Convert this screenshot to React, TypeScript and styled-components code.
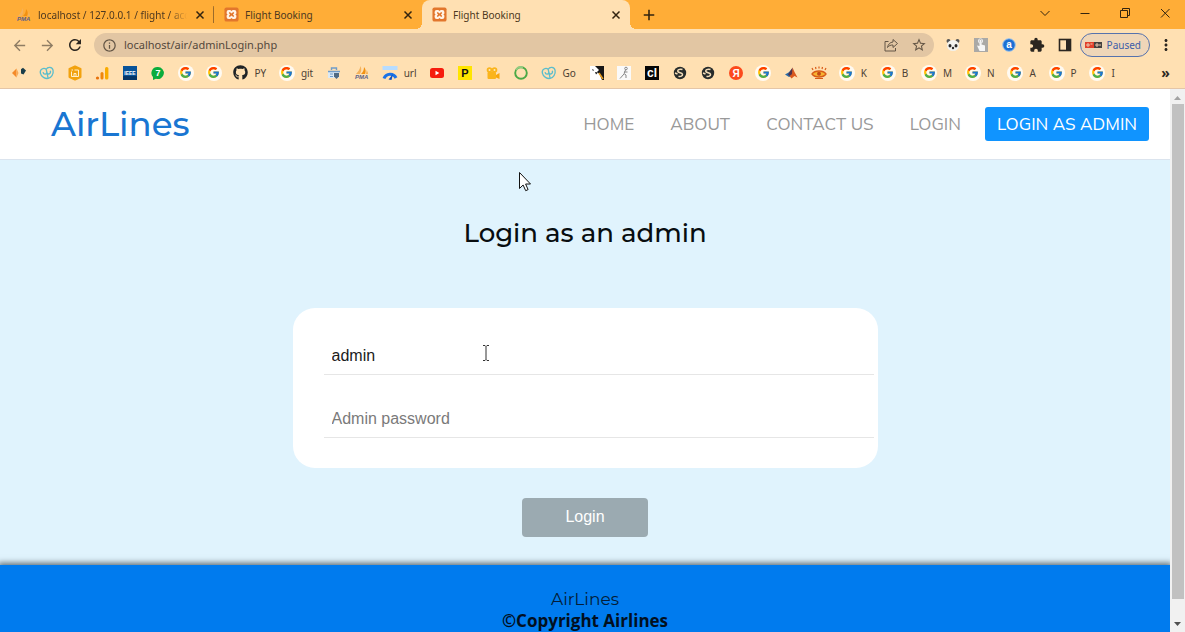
import React, { useState } from "react";
import styled, { createGlobalStyle, css } from "styled-components";
import { FcGoogle } from "react-icons/fc";
import { FaGithub } from "react-icons/fa";
import {
  MdArrowBack,
  MdArrowForward,
  MdExtension,
  MdInfoOutline,
  MdMoreVert,
  MdRefresh,
  MdStarBorder,
} from "react-icons/md";

const uiFont = `"Noto Sans", "Open Sans", sans-serif`;
const brandFont = `"Montserrat", "Inter", sans-serif`;
const navFont = `"Muli", "Mulish", "Nunito Sans", "Nunito", "Lato", sans-serif`;
const formFont = `"Liberation Sans", Arial, sans-serif`;

const GlobalStyle = createGlobalStyle`
  *, *::before, *::after { box-sizing: border-box; }
  body { margin: 0; font-family: ${uiFont}; }
  button { border: 0; padding: 0; margin: 0; background: none; font: inherit; color: inherit; }
  a { color: inherit; text-decoration: none; }
  svg { display: block; flex: none; }
`;

const Window = styled.div`
  position: relative;
  display: flex;
  flex-direction: column;
  height: 100vh;
  overflow: hidden;
`;

/* ---------- Browser chrome ---------- */

const TabStrip = styled.div`
  display: flex;
  align-items: stretch;
  height: 29px;
  padding-left: 6px;
  background: #ffad37;
  color: #4d3820;
`;

const TabItem = styled.div<{ $active?: boolean; $divider?: boolean }>`
  position: relative;
  display: flex;
  align-items: center;
  gap: 6px;
  width: 208px;
  padding: 0 7px 0 10px;
  font-size: 10px;
  line-height: 14px;
  border-radius: 8px 8px 0 0;
  background: ${(p) => (p.$active ? "#ffe0b2" : "transparent")};
  ${(p) =>
    p.$divider &&
    css`
      background: linear-gradient(#9c6b2a, #9c6b2a) right center / 1px 17px no-repeat;
    `}
  ${(p) =>
    p.$active &&
    css`
      &::before,
      &::after {
        content: "";
        position: absolute;
        bottom: 0;
        width: 6px;
        height: 6px;
      }
      &::before {
        right: 100%;
        background: radial-gradient(circle at 0 0, transparent 6px, #ffe0b2 6px);
      }
      &::after {
        left: 100%;
        background: radial-gradient(circle at 100% 0, transparent 6px, #ffe0b2 6px);
      }
    `}
`;

const TabTitle = styled.span<{ $fade?: boolean }>`
  flex: 1;
  overflow: hidden;
  white-space: nowrap;
  ${(p) =>
    p.$fade &&
    css`
      mask-image: linear-gradient(to right, #000 88%, transparent);
    `}
`;

const IconButton = styled.button<{ $size?: number }>`
  display: flex;
  align-items: center;
  justify-content: center;
  flex: none;
  width: ${(p) => p.$size ?? 18}px;
  height: ${(p) => p.$size ?? 18}px;
`;

const NewTab = styled(IconButton)`
  align-self: center;
  margin-left: 10px;
  color: #33240f;
`;

const WindowControls = styled.div`
  display: flex;
  align-items: center;
  gap: 22px;
  margin-left: auto;
  padding: 0 11px 4px 0;
  color: #33240f;
`;

const Toolbar = styled.div`
  display: flex;
  align-items: center;
  gap: 10px;
  height: 32px;
  padding: 0 10px;
  background: #ffe0b2;
  color: #2b2620;
`;

const AddressBar = styled.div`
  display: flex;
  align-items: center;
  gap: 7px;
  flex: 1;
  height: 24px;
  padding: 0 6px 0 8px;
  border-radius: 12px;
  background: #e2c6a3;
  color: #645646;
`;

const AddressInput = styled.input`
  flex: 1;
  min-width: 0;
  padding: 0;
  border: 0;
  outline: 0;
  background: transparent;
  color: #54483c;
  font-family: ${uiFont};
  font-size: 11px;
  line-height: 18px;
`;

const NavGroup = styled.div<{ $muted?: boolean }>`
  display: flex;
  gap: 10px;
  color: ${(p) => (p.$muted ? "#8f7d64" : "inherit")};
`;

const Extensions = styled.div`
  display: flex;
  align-items: center;
  gap: 10px;
`;

const ProfileChip = styled.button`
  display: flex;
  align-items: center;
  justify-content: space-between;
  width: 70px;
  height: 24px;
  margin-left: -4px;
  padding: 0 8px 0 4px;
  border: 1px solid #5672ad;
  border-radius: 12px;
  background: #efd6b8;
  color: #3c5da8;
  font-size: 10px;
`;

const MenuButton = styled(IconButton)`
  margin-left: -3px;
`;

const Bookmarks = styled.nav`
  display: flex;
  align-items: center;
  justify-content: space-between;
  height: 28px;
  padding: 0 11px 4px 11px;
  border-bottom: 1px solid #e4c6a8;
  background: #ffe0b2;
  color: #4d4034;
`;

const Bookmark = styled.a<{ $labelled?: boolean }>`
  display: flex;
  align-items: center;
  gap: 6px;
  padding-right: ${(p) => (p.$labelled ? 1 : 0)}px;
  font-size: 10px;
  line-height: 16px;
`;

const More = styled.button`
  width: 16px;
  margin-left: 30px;
  font-size: 14px;
  font-weight: 700;
  line-height: 16px;
  color: #2b2620;
`;

const IconCircle = styled.span`
  display: flex;
  align-items: center;
  justify-content: center;
  width: 16px;
  height: 16px;
  border-radius: 8px;
  background: #fffaf2;
`;

/* ---------- Site ---------- */

const Viewport = styled.div`
  display: flex;
  flex: 1;
  min-height: 0;
`;

const Site = styled.div`
  display: flex;
  flex-direction: column;
  flex: 1;
  min-width: 0;
  overflow: hidden;
  background: #e0f3fd;
`;

const Header = styled.header`
  display: flex;
  align-items: center;
  justify-content: space-between;
  flex: none;
  height: 71px;
  padding: 0 21px 0 51px;
  border-bottom: 1px solid #dbe4ee;
  background: #fff;
`;

const Logo = styled.a`
  font-family: ${brandFont};
  font-size: 34px;
  font-weight: 500;
  line-height: 44px;
  color: #1976d2;
`;

const Menu = styled.nav`
  display: flex;
  gap: 12px;
`;

const MenuLink = styled.a<{ $primary?: boolean }>`
  padding: 0 12px;
  border-radius: 3px;
  background: ${(p) => (p.$primary ? "#1094ff" : "transparent")};
  color: ${(p) => (p.$primary ? "#fff" : "#999")};
  font-family: ${navFont};
  font-size: 17px;
  line-height: 34px;
  white-space: nowrap;
`;

const Main = styled.main`
  display: flex;
  flex-direction: column;
  align-items: center;
  flex: none;
  padding: 55px 0 28px;
`;

const Title = styled.h1`
  margin: 0 0 57px;
  font-family: ${brandFont};
  font-size: 26px;
  font-weight: 500;
  line-height: 36px;
  color: #080d10;
`;

const Form = styled.form`
  display: flex;
  flex-direction: column;
  align-items: center;
  gap: 30px;
  width: 50%;
`;

const Card = styled.div`
  display: flex;
  flex-direction: column;
  gap: 24px;
  width: 100%;
  padding: 28px 4px 30px 31px;
  border-radius: 22px;
  background: #fff;
`;

const Field = styled.input`
  width: 100%;
  height: 39px;
  padding: 2px 8px 0;
  border: 0;
  border-bottom: 1px solid #e6e6e6;
  outline: 0;
  background: transparent;
  color: #1b1b1b;
  font-family: ${formFont};
  font-size: 16px;
  &::placeholder {
    color: #7a7a7a;
    opacity: 1;
  }
`;

const Submit = styled.button`
  width: 126px;
  height: 39px;
  padding-bottom: 2px;
  border-radius: 4px;
  background: #9baab1;
  color: #fff;
  font-family: ${formFont};
  font-size: 16px;
`;

const Footer = styled.footer`
  flex: 1 0 auto;
  padding: 22px 0;
  background: #007bee;
  box-shadow: 0 0 6px 2px #5d6c73;
  color: #031d38;
  text-align: center;
`;

const FooterBrand = styled.div`
  font-family: ${brandFont};
  font-size: 17px;
  line-height: 24px;
`;

const Copyright = styled.div`
  font-family: "Open Sans", sans-serif;
  font-size: 17px;
  font-weight: 700;
  line-height: 20px;
  color: #02101f;
`;

const ScrollTrack = styled.div`
  display: flex;
  flex-direction: column;
  align-items: center;
  flex: none;
  width: 15px;
  padding: 6px 0 5px;
  background: #f1f1f1;
`;

const ScrollThumb = styled.div`
  flex: 1;
  width: 12px;
  margin: 4px 0 23px;
  background: #c1c1c1;
`;

const Pointer = styled.svg<{ $x: number; $y: number }>`
  position: absolute;
  left: ${(p) => p.$x}px;
  top: ${(p) => p.$y}px;
  pointer-events: none;
`;

/* ---------- Drawings ---------- */

const Art = ({ children, size = 16 }: { children: React.ReactNode; size?: number }) => (
  <svg width={size} height={size} viewBox="0 0 16 16" fill="none" aria-hidden="true">
    {children}
  </svg>
);

const Xampp = () => (
  <Art size={15}>
    <rect x="0.5" y="0.5" width="15" height="15" rx="2" fill="#e2762c" />
    <path d="M5 3.2h1.700L8 4.300l1.300-1.100H11a2.200 2.200 0 0 1 2.200 2.200V7l-1 1 1 1v1.600a2.200 2.200 0 0 1-2.200 2.200H9.300L8 11.700l-1.300 1.100H5a2.200 2.200 0 0 1-2.200-2.200V9l1-1-1-1V5.400A2.200 2.200 0 0 1 5 3.200z" fill="#fff3e6" />
    <path d="M5.300 5.500h1.200L8 7l1.500-1.500h1.200v1.200L9.500 8l1.200 1.300v1.200H9.500L8 9l-1.500 1.500H5.300V9.300L6.500 8 5.300 6.700z" fill="#e2762c" />
  </Art>
);

const Cross = () => (
  <Art size={14}>
    <path d="M4 4l8 8M12 4l-8 8" stroke="#33240f" strokeWidth="1.700" />
  </Art>
);

const Pma = () => (
  <Art>
    <path d="M2 9C4 7 6 4 6.500 1 8 4 7 7 6 9z" fill="#f5b25b" />
    <path d="M7 9c2-2 3-4 3-7 2 2 2 5 1 7z" fill="#f29111" />
    <path d="M11.500 9c1-1 1-3 1-4 1 1 1.500 3 1.500 4z" fill="#f5b25b" />
    <text x="1" y="14" fontFamily="Liberation Sans" fontStyle="italic" fontWeight="700" fontSize="6" fill="#5d6088">PMA</text>
  </Art>
);

const Diamonds = () => (
  <Art>
    <path d="M1 8l4.500-4.500v9z" fill="#f48a29" />
    <path d="M5.500 3.500l2 4.500-2 4.500z" fill="#f8a957" />
    <path d="M10 4.300l2-1.500 3 2.700-2.500 4-2.500-1z" fill="#193d4a" />
  </Art>
);

const Geeks = () => (
  <Art>
    <g transform="rotate(-12 8 8)" stroke="#5bbdcc" strokeWidth="1.300">
      <path d="M8 4.200C6 1.800 1.500 2.700 1.500 6.700c0 3.800 3.500 6.800 6.500 6.800s6.500-3 6.500-6.800C14.500 2.700 10 1.800 8 4.200z" />
      <path d="M4.300 6.300c0 3 3.700 3.500 3.700.2V4.200M8 4.200v3c0 3.300 4 2.500 3.700-.7M8 8.500v5" />
    </g>
  </Art>
);

const HexBox = () => (
  <Art>
    <path d="M8 1.500l5.500 2.500v8L8 14.500 2.500 12V4z" fill="#f2a20f" stroke="#f2a20f" strokeWidth="2" strokeLinejoin="round" />
    <path d="M4.500 6.500v5h7V5h-4M7 11V8.500h2V11M4.500 5H6" stroke="#fff0cf" />
  </Art>
);

const Analytics = () => (
  <Art>
    <circle cx="3.500" cy="13" r="1.600" fill="#e8710a" />
    <rect x="6.500" y="7" width="3" height="7.500" rx="1.500" fill="#ef860c" />
    <rect x="11" y="2" width="3.400" height="12.500" rx="1.500" fill="#f9ab00" />
  </Art>
);

const Ieee = () => (
  <Art>
    <rect x="1" y="1" width="14" height="14" fill="#07539a" />
    <rect x="1" y="11" width="14" height="4" fill="#053668" />
    <text x="8" y="9.500" textAnchor="middle" fontFamily="Liberation Sans" fontWeight="700" fontSize="5" fill="#fff">IEEE</text>
  </Art>
);

const Seven = () => (
  <Art>
    <path d="M8 2a6 6 0 1 1-2 11.700L3 15v-3A6 6 0 0 1 8 2z" fill="#0aac3d" />
    <text x="8" y="11" textAnchor="middle" fontFamily="Liberation Sans" fontWeight="700" fontSize="9" fill="#fff">7</text>
  </Art>
);

const Google = () => (
  <IconCircle>
    <FcGoogle size={13} />
  </IconCircle>
);

const StoreBag = () => (
  <Art>
    <path d="M2 6h11v7H2z" fill="#dbe9f5" />
    <path d="M5.500 5V3h5v2M2 6.500h12" stroke="#6f9cc9" strokeWidth="1.400" />
    <path d="M4 9h3M4 11.500h3" stroke="#6f9cc9" />
    <path d="M8 8h5v3.500L10.500 14 8 11.500z" fill="#506a83" />
  </Art>
);

const Speed = () => (
  <Art>
    <rect x="0.500" y="1" width="15" height="4" fill="#b7dcff" />
    <path d="M2 13.500a6.500 6.500 0 0 1 12-.5" stroke="#1a73e8" strokeWidth="3" />
    <path d="M6.500 14.500L11 9l-1.500 6z" fill="#0d4fbf" />
  </Art>
);

const YouTube = () => (
  <Art>
    <rect x="1" y="3" width="14" height="10" rx="2.500" fill="#f61c0d" />
    <path d="M6.500 5.800v4.400L10.300 8z" fill="#fff" />
  </Art>
);

const YellowP = () => (
  <Art>
    <rect x="1" y="1" width="14" height="14" fill="#ffe500" />
    <text x="8" y="12" textAnchor="middle" fontFamily="Liberation Sans" fontWeight="700" fontSize="11" fill="#111">P</text>
  </Art>
);

const Camera = () => (
  <Art>
    <circle cx="4.500" cy="5" r="2.800" fill="#fab41c" />
    <circle cx="9.500" cy="5" r="2.800" fill="#fab41c" />
    <rect x="2.500" y="7" width="8.500" height="7" rx="1" fill="#fab41c" />
    <path d="M11 10l3.500-2v6L11 12.500z" fill="#f8a60c" />
    <circle cx="4.500" cy="5" r="1" fill="#ffe8b7" />
    <circle cx="9.500" cy="5" r="1" fill="#ffe8b7" />
  </Art>
);

const Ring = () => (
  <Art>
    <circle cx="8" cy="8" r="5.800" stroke="#4ca946" strokeWidth="1.900" />
    <path d="M3 5a6 6 0 0 1 7-2.500" stroke="#93cb80" strokeWidth="1.900" />
  </Art>
);

const Bird = () => (
  <Art>
    <rect x="1" y="1" width="14" height="14" fill="#fff" />
    <path d="M6 1h9v14h-2L10.500 9 8 7l2-2z" fill="#171717" />
    <path d="M3 4l2 1-1 1zM6 7l3 .5-2 2z" fill="#171717" />
    <path d="M10 8l4 6" stroke="#e89c1c" strokeWidth="1.500" />
  </Art>
);

const Figure = () => (
  <Art>
    <rect x="1" y="1" width="14" height="14" fill="#fafafa" />
    <circle cx="10" cy="3.500" r="1.300" stroke="#888" />
    <path d="M9.500 5L8 8.500l2 1.500v3M8 9l-4 4.500M8 7l3.500 0" stroke="#888" />
  </Art>
);

const Cl = () => (
  <Art>
    <rect x="1" y="1" width="14" height="14" fill="#050505" />
    <text x="8" y="12" textAnchor="middle" fontFamily="Liberation Sans" fontWeight="700" fontSize="12" fill="#fff">cl</text>
  </Art>
);

const Globe = () => (
  <Art>
    <circle cx="8" cy="8" r="6.200" fill="#262b2b" />
    <path d="M10.500 4.500C7.500 3.500 5 5 6 6.800c1 1.300 4 .7 4.500 2.500.3 1.500-2 2.700-4 2M3 8l2.500 1" stroke="#f1dcb9" strokeWidth="1.500" />
  </Art>
);

const Yandex = () => (
  <Art>
    <circle cx="8" cy="8" r="7" fill="#fc4a1c" />
    <text x="8" y="11.500" textAnchor="middle" fontFamily="Liberation Sans" fontWeight="700" fontSize="10" fill="#fff">Я</text>
  </Art>
);

const Matlab = () => (
  <Art>
    <path d="M2 9.500l3.500-2L9 4v7l-3 1z" fill="#2b6ba6" />
    <path d="M9.500 2.500L11.500 7l3 5.500-3-1.500-3 2.500L6.500 11l2-2z" fill="#d9581f" />
    <path d="M9.500 2.500L9 9l-2.500 2L5 9.500z" fill="#51324a" />
  </Art>
);

const Eye = () => (
  <Art>
    <path d="M1 9c3-4 11-4 14 0-3 4-11 4-14 0z" fill="#f7b331" stroke="#d85c18" strokeWidth="1.300" />
    <circle cx="8" cy="8.800" r="2" fill="#c24a16" />
    <path d="M2 5L1 3M5 4l-.5-2M8 3.500v-2M11 4l.5-2M14 5l1-2M4 13.500h8" stroke="#d85c18" strokeWidth="1.200" />
  </Art>
);

const Panda = () => (
  <Art>
    <circle cx="3.500" cy="4" r="2" fill="#555" />
    <circle cx="12.500" cy="4" r="2" fill="#555" />
    <ellipse cx="8" cy="8.500" rx="6" ry="5.500" fill="#f2f2ee" />
    <ellipse cx="5" cy="8.800" rx="1.500" ry="1.800" fill="#292929" />
    <ellipse cx="11" cy="8.800" rx="1.500" ry="1.800" fill="#292929" />
    <circle cx="8" cy="11" r="1.200" fill="#292929" />
  </Art>
);

const Touch = () => (
  <Art>
    <rect x="1" y="1" width="14" height="14" fill="#aaa9a6" />
    <path d="M6.500 3v6L4 8.500 6.500 14H12V8.500L8.500 7.500V3z" fill="#f6f6f6" />
    <circle cx="7.500" cy="4" r="2.200" stroke="#ededed" />
  </Art>
);

const CircleA = () => (
  <Art>
    <circle cx="8" cy="8" r="6.300" fill="#1b6fd3" stroke="#9cc4ed" />
    <text x="8" y="11.200" textAnchor="middle" fontFamily="Liberation Sans" fontWeight="700" fontSize="10" fill="#fff">a</text>
  </Art>
);

const SidePanel = () => (
  <Art>
    <rect x="2.500" y="2.500" width="11" height="11" stroke="#2b2620" strokeWidth="1.600" />
    <path d="M9 2h5v12H9z" fill="#2b2620" />
  </Art>
);

const Share = () => (
  <Art>
    <path d="M5.500 4.500H2V14h10.500v-3" stroke="currentColor" />
    <path d="M10 2.500l4.500 4L10 10.500V8c-2.500 0-4 .5-5.500 2.500C5 7.500 7 5.200 10 5z" stroke="currentColor" />
  </Art>
);

const ProfileBadge = () => (
  <svg width="17" height="8" viewBox="0 0 17 8" aria-hidden="true">
    <rect y="1" width="9" height="6" fill="#e2402a" />
    <rect x="9" y="1" width="8" height="6" fill="#44413f" />
    <path d="M2 3h2v2H2zM5.500 3h2M11 3h2v2h-2zM14 4h2" stroke="#eac9b0" strokeWidth="1" fill="none" />
  </svg>
);

/* ---------- Data ---------- */

type Mark = { name: string; icon: React.ReactNode; label?: string };

const marks: Mark[] = [
  { name: "Diamonds", icon: <Diamonds /> },
  { name: "Geeks", icon: <Geeks /> },
  { name: "Box", icon: <HexBox /> },
  { name: "Analytics", icon: <Analytics /> },
  { name: "IEEE", icon: <Ieee /> },
  { name: "Chat", icon: <Seven /> },
  { name: "Google", icon: <Google /> },
  { name: "Google", icon: <Google /> },
  { name: "GitHub", icon: <FaGithub size={15} color="#1f2326" />, label: "PY" },
  { name: "Google", icon: <Google />, label: "git" },
  { name: "Store", icon: <StoreBag /> },
  { name: "phpMyAdmin", icon: <Pma /> },
  { name: "Speed", icon: <Speed />, label: "url" },
  { name: "YouTube", icon: <YouTube /> },
  { name: "P", icon: <YellowP /> },
  { name: "Camera", icon: <Camera /> },
  { name: "Ring", icon: <Ring /> },
  { name: "Geeks", icon: <Geeks />, label: "Go" },
  { name: "Bird", icon: <Bird /> },
  { name: "Figure", icon: <Figure /> },
  { name: "cl", icon: <Cl /> },
  { name: "Globe", icon: <Globe /> },
  { name: "Globe", icon: <Globe /> },
  { name: "Yandex", icon: <Yandex /> },
  { name: "Google", icon: <Google /> },
  { name: "Matlab", icon: <Matlab /> },
  { name: "Eye", icon: <Eye /> },
  ...["K", "B", "M", "N", "A", "P", "I"].map((label) => ({
    name: "Google",
    icon: <Google />,
    label,
  })),
];

const tabs = [
  { title: "localhost / 127.0.0.1 / flight / acc", icon: <Pma />, fade: true, divider: true },
  { title: "Flight Booking", icon: <Xampp /> },
  { title: "Flight Booking", icon: <Xampp />, active: true },
];

export default function App() {
  const [url, setUrl] = useState("localhost/air/adminLogin.php");
  const [user, setUser] = useState("admin");
  const [password, setPassword] = useState("");

  return (
    <Window>
      <GlobalStyle />
      <TabStrip>
        {tabs.map((tab, i) => (
          <TabItem key={i} $active={tab.active} $divider={tab.divider}>
            {tab.icon}
            <TabTitle $fade={tab.fade}>{tab.title}</TabTitle>
            <IconButton $size={14} aria-label="Close tab">
              <Cross />
            </IconButton>
          </TabItem>
        ))}
        <NewTab aria-label="New tab">
          <Art size={14}>
            <path d="M8 2v12M2 8h12" stroke="currentColor" strokeWidth="1.800" />
          </Art>
        </NewTab>
        <WindowControls>
          <IconButton aria-label="Search tabs">
            <Art><path d="M3.500 6L8 10.500 12.500 6" stroke="currentColor" /></Art>
          </IconButton>
          <IconButton aria-label="Minimize">
            <Art><path d="M3.500 8.500h9" stroke="currentColor" /></Art>
          </IconButton>
          <IconButton aria-label="Restore">
            <Art><path d="M3.500 5.500h7v7h-7zM5.500 5.500v-2h7v7h-2" stroke="currentColor" /></Art>
          </IconButton>
          <IconButton aria-label="Close">
            <Art><path d="M4 4l8.500 8.500M12.500 4L4 12.500" stroke="currentColor" /></Art>
          </IconButton>
        </WindowControls>
      </TabStrip>

      <Toolbar>
        <NavGroup $muted>
          <IconButton aria-label="Back"><MdArrowBack size={17} /></IconButton>
          <IconButton aria-label="Forward"><MdArrowForward size={17} /></IconButton>
        </NavGroup>
        <IconButton aria-label="Reload"><MdRefresh size={18} /></IconButton>
        <AddressBar>
          <MdInfoOutline size={15} />
          <AddressInput aria-label="Address" value={url} onChange={(e) => setUrl(e.target.value)} />
          <NavGroup>
            <IconButton aria-label="Share"><Share /></IconButton>
            <IconButton aria-label="Bookmark"><MdStarBorder size={16} /></IconButton>
          </NavGroup>
        </AddressBar>
        <Extensions>
          <IconButton aria-label="Panda"><Panda /></IconButton>
          <IconButton aria-label="Touch"><Touch /></IconButton>
          <IconButton aria-label="Translate"><CircleA /></IconButton>
          <IconButton aria-label="Extensions"><MdExtension size={16} /></IconButton>
          <IconButton aria-label="Side panel"><SidePanel /></IconButton>
        </Extensions>
        <ProfileChip>
          <ProfileBadge />
          Paused
        </ProfileChip>
        <MenuButton aria-label="Menu"><MdMoreVert size={18} /></MenuButton>
      </Toolbar>

      <Bookmarks aria-label="Bookmarks">
        {marks.map((mark, i) => (
          <Bookmark
            key={i}
            href="#"
            aria-label={mark.label ?? mark.name}
            $labelled={Boolean(mark.label)}
          >
            {mark.icon}
            {mark.label}
          </Bookmark>
        ))}
        <More aria-label="More bookmarks">»</More>
      </Bookmarks>

      <Viewport>
        <Site>
          <Header>
            <Logo href="#">AirLines</Logo>
            <Menu>
              <MenuLink href="#">HOME</MenuLink>
              <MenuLink href="#">ABOUT</MenuLink>
              <MenuLink href="#">CONTACT US</MenuLink>
              <MenuLink href="#">LOGIN</MenuLink>
              <MenuLink href="#" $primary>LOGIN AS ADMIN</MenuLink>
            </Menu>
          </Header>
          <Main>
            <Title>Login as an admin</Title>
            <Form onSubmit={(e) => e.preventDefault()}>
              <Card>
                <Field
                  aria-label="Admin username"
                  value={user}
                  onChange={(e) => setUser(e.target.value)}
                />
                <Field
                  type="password"
                  aria-label="Admin password"
                  placeholder="Admin password"
                  value={password}
                  onChange={(e) => setPassword(e.target.value)}
                />
              </Card>
              <Submit type="submit">Login</Submit>
            </Form>
          </Main>
          <Footer>
            <FooterBrand>AirLines</FooterBrand>
            <Copyright>©Copyright Airlines</Copyright>
          </Footer>
        </Site>
        <ScrollTrack>
          <svg width="7" height="5" viewBox="0 0 7 5" aria-hidden="true">
            <path d="M0 5l3.500-4L7 5z" fill="#a3a3a3" />
          </svg>
          <ScrollThumb />
          <svg width="7" height="5" viewBox="0 0 7 5" aria-hidden="true">
            <path d="M0 0l3.500 4L7 0z" fill="#505050" />
          </svg>
        </ScrollTrack>
      </Viewport>

      <Pointer $x={518} $y={171} width="14" height="21" viewBox="0 0 14 21" aria-hidden="true">
        <path d="M1.500 1.500v16l3.600-3.500 2.600 5.700 2.400-1.100-2.500-5.600h4.900z" fill="#fff" stroke="#111" />
      </Pointer>
      <Pointer $x={482} $y={345} width="8" height="16" viewBox="0 0 8 16" aria-hidden="true">
        <path d="M1 .5h2l1 1 1-1h2M4 1.500v13M1 15.500h2l1-1 1 1h2" fill="none" stroke="#333" />
      </Pointer>
    </Window>
  );
}
